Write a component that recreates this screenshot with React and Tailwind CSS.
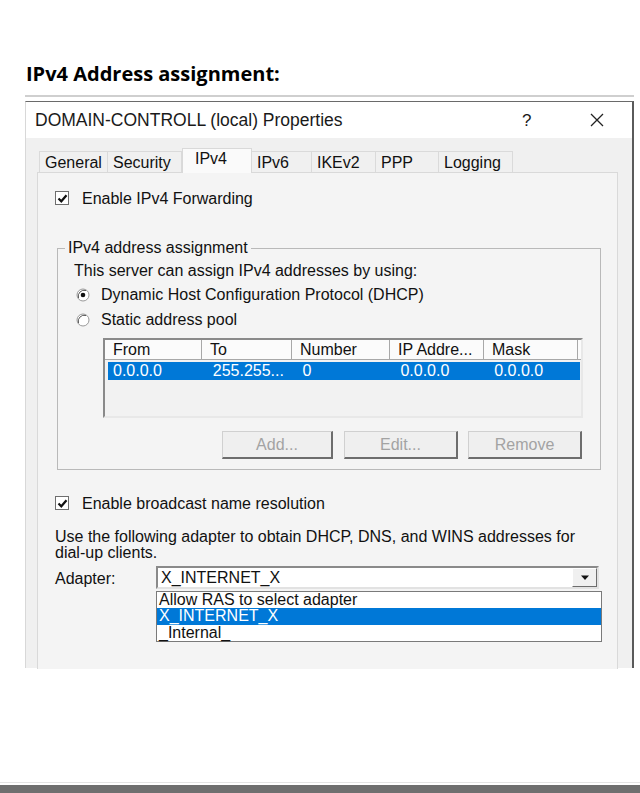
import React from 'react';

const font = { fontFamily: '"Liberation Sans", Arial, sans-serif' };

const Checkbox = () => (
  <div className="w-[14px] h-[14px] border border-[#6e6e6e] bg-white flex items-center justify-center shrink-0">
    <svg width="11" height="11" viewBox="0 0 11 11">
      <path d="M1.5 5.5 L4.3 8.3 L9.5 2.2" fill="none" stroke="#111" strokeWidth="2.2" />
    </svg>
  </div>
);

const Radio = ({ checked }) => (
  <svg width="14" height="14" viewBox="0 0 14 14" className="shrink-0">
    <circle cx="7" cy="7" r="6" fill="#fff" stroke="#9a9a9a" />
    <path d="M2.5 10 A6 6 0 0 1 10 2.5" fill="none" stroke="#5a5a5a" strokeWidth="1" />
    {checked && <circle cx="7" cy="7" r="2.3" fill="#111" />}
  </svg>
);

const Button = ({ children }) => (
  <div className="h-[28px] flex items-center justify-center bg-[#efefef] border border-[#d0d0d0] border-r-2 border-b-2 border-r-[#6d6d6d] border-b-[#6d6d6d] text-[#a3a3a3]">
    {children}
  </div>
);

const columns = [
  { label: 'From', w: 'w-[97px]' },
  { label: 'To', w: 'w-[90px]' },
  { label: 'Number', w: 'w-[98px]' },
  { label: 'IP Addre...', w: 'w-[94px]' },
  { label: 'Mask', w: 'w-[94px]' },
];
const row = ['0.0.0.0', '255.255...', '0', '0.0.0.0', '0.0.0.0'];

export default function App() {
  return (
    <div className="w-[640px] h-[793px] bg-white flex flex-col text-[#111] text-[16px] leading-none" style={font}>
      {/* Heading */}
      <div
        className="h-[95px] pl-[26px] pt-[64px] text-[20px] font-bold text-black"
        style={{ fontFamily: '"Open Sans", "Liberation Sans", sans-serif' }}
      >
        IPv4 Address assignment:
      </div>

      {/* Dialog frame */}
      <div className="ml-[25px] w-[609px] border-t-2 border-[#cfcfcf] pt-[4px]">
        <div className="border-t border-r-2 border-l border-t-[#6a6a6a] border-r-[#5a5a5a] border-l-[#d8d8d8]">
          {/* Title bar */}
          <div className="h-[36px] bg-white flex items-center pl-[9px] text-[17.5px] text-[#1a1a1a]">
            <span className="flex-1 pt-[1px]">DOMAIN-CONTROLL (local) Properties</span>
            <span className="w-[40px] text-[17px] pt-[1px]">?</span>
            <div className="w-[70px] flex justify-center">
              <svg width="16" height="16" viewBox="0 0 16 16">
                <path d="M2 2 L14 14 M14 2 L2 14" stroke="#222" strokeWidth="1.3" />
              </svg>
            </div>
          </div>

          {/* Body */}
          <div className="bg-[#f0f0f0] h-[530px] pt-[10px] pl-[11px] pr-[14px]">
            {/* Tabs */}
            <div className="flex items-end h-[24px] pl-[3px]">
              {[
                ['General', 'w-[69px]'],
                ['Security', 'w-[75px]'],
                ['IPv4', 'w-[70px]', true],
                ['IPv6', 'w-[61px]'],
                ['IKEv2', 'w-[65px]'],
                ['PPP', 'w-[64px]'],
                ['Logging', 'w-[75px]'],
              ].map(([label, w, sel]) => (
                <div
                  key={label}
                  className={`${w} ${
                    sel
                      ? 'h-[25px] bg-[#fafafa] border border-b-0 border-[#d9d9d9] -mb-px relative pt-[2px] pl-[12px]'
                      : 'h-[21px] border border-b-0 border-[#dadada] -ml-px pl-[5px] pt-[3px]'
                  } flex items-start`}
                >
                  {label}
                </div>
              ))}
            </div>

            {/* Panel */}
            <div className="border border-b-0 border-[#d9d9d9] bg-[#f4f4f4] h-[497px] pl-[17px] pr-[17px] pt-[17px]">
              <div className="flex items-center gap-[13px] h-[16px]">
                <Checkbox />
                <span className="pt-[1px]">Enable IPv4 Forwarding</span>
              </div>

              {/* Group box */}
              <fieldset className="mt-[34px] ml-[2px] w-[544px] h-[230px] border border-[#b9b9b9] pl-[16px] pr-[16px]">
                <legend className="-ml-[9px] px-[3px]">IPv4 address assignment</legend>
                <div className="mt-[7px] h-[16px]">This server can assign IPv4 addresses by using:</div>
                <div className="mt-[8px] flex items-center gap-[11px] h-[16px] pl-[2px]">
                  <Radio checked />
                  <span>Dynamic Host Configuration Protocol (DHCP)</span>
                </div>
                <div className="mt-[9px] flex items-center gap-[11px] h-[16px] pl-[2px]">
                  <Radio />
                  <span>Static address pool</span>
                </div>

                {/* List view */}
                <div className="mt-[10px] ml-[29px] w-[480px] h-[80px] border-2 border-[#8a8a8a] border-r-[#e8e8e8] border-b-[#e8e8e8] bg-[#f2f2f2]">
                  <div className="flex h-[20px] bg-[#fbfbfb]">
                    {columns.map((c) => (
                      <div
                        key={c.label}
                        className={`${c.w} border-r border-b border-[#a8a8a8] pl-[8px] flex items-center`}
                      >
                        {c.label}
                      </div>
                    ))}
                    <div className="flex-1 border-b border-[#a8a8a8]" />
                  </div>
                  <div className="mt-[2px] ml-[3px] mr-[1px] h-[18px] bg-[#0078d7] text-white flex">
                    {row.map((v, i) => (
                      <div key={i} className={`${columns[i].w} ${i === 0 ? 'pl-[5px]' : 'pl-[8px]'} flex items-center`}>
                        {v}
                      </div>
                    ))}
                  </div>
                </div>

                {/* Buttons */}
                <div className="mt-[13px] ml-[148px] flex">
                  <div className="w-[111px]"><Button>Add...</Button></div>
                  <div className="w-[114px] ml-[11px]"><Button>Edit...</Button></div>
                  <div className="w-[114px] ml-[10px]"><Button>Remove</Button></div>
                </div>
              </fieldset>

              <div className="mt-[25px] flex items-center gap-[13px] h-[16px]">
                <Checkbox />
                <span className="pt-[1px]">Enable broadcast name resolution</span>
              </div>

              <div className="mt-[18px] leading-[16px]">
                Use the following adapter to obtain DHCP, DNS, and WINS addresses for
                <br />
                dial-up clients.
              </div>

              {/* Adapter row */}
              <div className="mt-[5px] flex">
                <div className="w-[101px] pt-[5px]">Adapter:</div>
                <div className="w-[443px]">
                  <div className="h-[23px] bg-white border-2 border-[#8a8a8a] border-r-[#e2e2e2] border-b-[#e2e2e2] flex">
                    <div className="flex-1 pl-[3px] flex items-center">X_INTERNET_X</div>
                    <div className="w-[25px] bg-[#f0f0f0] border border-[#fff] border-r-[#6d6d6d] border-b-[#6d6d6d] flex items-center justify-center">
                      <svg width="10" height="6" viewBox="0 0 10 6">
                        <path d="M1 0.5 H9 L5 5 Z" fill="#111" />
                      </svg>
                    </div>
                  </div>
                  <div className="mt-[2px] w-[446px] h-[51px] bg-white border border-[#7a7a7a] leading-[16px]">
                    <div className="h-[16px] pl-[2px]">Allow RAS to select adapter</div>
                    <div className="h-[17px] pl-[2px] bg-[#0078d7] text-white">X_INTERNET_X</div>
                    <div className="h-[16px] pl-[2px]">_Internal_</div>
                  </div>
                </div>
              </div>
            </div>
          </div>
        </div>
      </div>

      <div className="flex-1" />
      <div className="h-px bg-[#e4e4e4] mb-[2px]" />
      <div className="h-[8px] bg-[#6f6f6f]" />
    </div>
  );
}
